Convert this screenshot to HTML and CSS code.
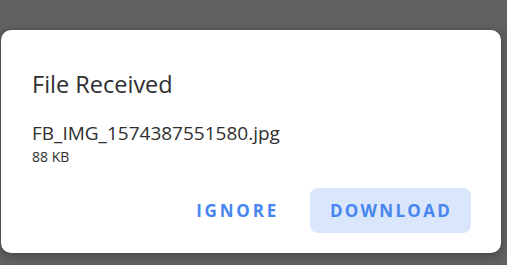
FILE: index.html
```html
<!DOCTYPE html>
<html>
<head>
<meta charset="utf-8">
<link rel="stylesheet" href="styles.css">
</head>
<body>
<div class="dialog">
  <h1 class="title">File Received</h1>
  <div class="file">
    <div class="name">FB_IMG_1574387551580.jpg</div>
    <div class="size">88 KB</div>
  </div>
  <div class="actions">
    <button class="btn text">IGNORE</button>
    <button class="btn filled">DOWNLOAD</button>
  </div>
</div>
</body>
</html>
```
FILE: styles.css
```css
html, body {
  margin: 0;
  padding: 0;
}
body {
  width: 507px;
  height: 265px;
  background: #616161;
  font-family: "Open Sans", "Noto Sans", sans-serif;
  overflow: hidden;
}
.dialog {
  box-sizing: border-box;
  margin: 30px 0 0 1px;
  width: 500px;
  height: 223px;
  background: #fff;
  border-radius: 10px;
  box-shadow: 0 2px 10px rgba(0,0,0,0.35);
  padding: 38px 30px 0 31px;
  display: flex;
  flex-direction: column;
}
.title {
  margin: 0;
  font-size: 23.5px;
  font-weight: 400;
  line-height: 32px;
  color: #2f2f2f;
}
.file {
  margin-top: 20px;
  color: #2f2f2f;
}
.name {
  font-size: 19px;
  line-height: 26px;
}
.size {
  font-size: 14px;
  line-height: 19px;
  margin-top: 1px;
}
.actions {
  margin-top: 22px;
  display: flex;
  justify-content: flex-end;
  align-items: center;
  gap: 31px;
}
.btn {
  border: none;
  background: none;
  font-family: "Open Sans", "Noto Sans", sans-serif;
  font-weight: 700;
  font-size: 17px;
  letter-spacing: 2.3px;
  color: #4785f0;
  padding: 0;
  cursor: pointer;
}
.text {
  letter-spacing: 2.8px;
}
.filled {
  background: #d9e6fc;
  border-radius: 8px;
  width: 161px;
  height: 45px;
  padding-left: 1px;
}
```
